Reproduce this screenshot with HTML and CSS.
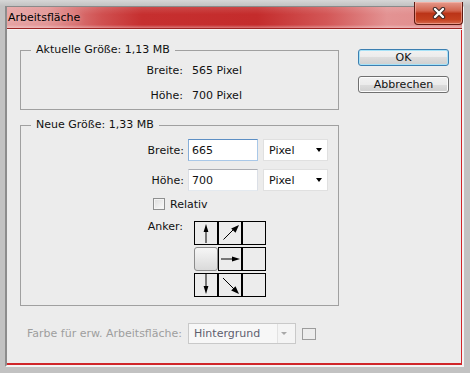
FILE: index.html
```html
<!DOCTYPE html>
<html lang="de">

<head>
    <meta charset="UTF-8">
    <title>Arbeitsfläche</title>
    <link rel="stylesheet" href="styles.css">
</head>

<body>
    <div class="frame">
        <div class="window">
            <header class="titlebar">
                <span class="title">Arbeitsfläche</span>
                <button class="close" aria-label="Schließen">
                    <svg width="14" height="12" viewBox="0 0 14 12">
                        <path d="M3 2 L11 10 M11 2 L3 10" stroke="#3b2a28" stroke-width="4.4" stroke-linecap="round" />
                        <path d="M3 2 L11 10 M11 2 L3 10" stroke="#ffffff" stroke-width="2.4" stroke-linecap="round" />
                    </svg>
                </button>
            </header>

            <div class="content">
                <div class="main-col">
                    <fieldset class="group group-current">
                        <legend>Aktuelle Größe: 1,13 MB</legend>
                        <div class="info-row">
                            <span class="label">Breite:</span>
                            <span class="value">565 Pixel</span>
                        </div>
                        <div class="info-row">
                            <span class="label">Höhe:</span>
                            <span class="value">700 Pixel</span>
                        </div>
                    </fieldset>

                    <fieldset class="group group-new">
                        <legend>Neue Größe: 1,33 MB</legend>
                        <div class="field-row">
                            <label class="label" for="breite">Breite:</label>
                            <input class="text-input focused" id="breite" type="text" value="665">
                            <div class="dropdown">
                                <span>Pixel</span>
                                <span class="caret"></span>
                            </div>
                        </div>
                        <div class="field-row">
                            <label class="label" for="hoehe">Höhe:</label>
                            <input class="text-input" id="hoehe" type="text" value="700">
                            <div class="dropdown">
                                <span>Pixel</span>
                                <span class="caret"></span>
                            </div>
                        </div>
                        <div class="check-row">
                            <span class="checkbox"></span>
                            <span>Relativ</span>
                        </div>
                        <div class="anchor-row">
                            <span class="label">Anker:</span>
                            <div class="anchor-grid">
                                <div class="cell">
                                    <svg viewBox="0 0 22 22">
                                        <path d="M11 8 V21" stroke="#000" stroke-width="1" />
                                        <polygon points="11,2 8.6,10 13.4,10" fill="#000" />
                                    </svg>
                                </div>
                                <div class="cell">
                                    <svg viewBox="0 0 22 22">
                                        <path d="M4.5 17.5 L15 7" stroke="#000" stroke-width="1" />
                                        <polygon points="20,3 16.5,10.8 12.2,6.5" fill="#000" />
                                    </svg>
                                </div>
                                <div class="cell"></div>

                                <div class="cell selected"></div>
                                <div class="cell">
                                    <svg viewBox="0 0 22 22">
                                        <path d="M2 11 H15" stroke="#000" stroke-width="1" />
                                        <polygon points="21,11 13,8.6 13,13.4" fill="#000" />
                                    </svg>
                                </div>
                                <div class="cell"></div>

                                <div class="cell">
                                    <svg viewBox="0 0 22 22">
                                        <path d="M11 0 V14" stroke="#000" stroke-width="1" />
                                        <polygon points="11,20 8.6,12 13.4,12" fill="#000" />
                                    </svg>
                                </div>
                                <div class="cell">
                                    <svg viewBox="0 0 22 22">
                                        <path d="M4 4 L15 15" stroke="#000" stroke-width="1" />
                                        <polygon points="20,20 12.2,16.5 16.5,12.2" fill="#000" />
                                    </svg>
                                </div>
                                <div class="cell"></div>
                            </div>
                        </div>
                    </fieldset>

                    <div class="fill-row">
                        <span class="fill-label">Farbe für erw. Arbeitsfläche:</span>
                        <div class="dropdown disabled">
                            <span>Hintergrund</span>
                            <span class="caret"></span>
                        </div>
                        <span class="swatch"></span>
                    </div>
                </div>

                <div class="buttons">
                    <button class="btn btn-default">OK</button>
                    <button class="btn">Abbrechen</button>
                </div>
            </div>
        </div>
    </div>
</body>

</html>
```

FILE: styles.css
```css
body {
    margin: 0;
    font-family: "DejaVu Sans", sans-serif;
    font-size: 11px;
    color: #111;
    background-color: #c4c4c4;
}

.frame {
    width: 470px;
    height: 373px;
    box-sizing: border-box;
    padding: 6px 6px 6px 5px;
    background: linear-gradient(#d6d6d6, #c2c2c2 6px, #c2c2c2);
}

.window {
    position: relative;
    height: 100%;
    box-sizing: border-box;
    display: flex;
    flex-direction: column;
    border-left: 2px solid #8c8c8c;
    border-top: 1px solid #8a8a8a;
    border-right: 2px solid #f4f4f4;
    border-bottom: 2px solid #f4f4f4;
    box-shadow: inset -1px -2px 0 #d0262a;
    background-color: #ececec;
}

/* title bar */
.titlebar {
    height: 21px;
    flex: none;
    display: flex;
    align-items: center;
    padding-left: 1px;
    border-bottom: 1px solid #9c2424;
    background:
        linear-gradient(rgba(255, 255, 255, 0.12), rgba(255, 255, 255, 0) 35%, rgba(255, 255, 255, 0) 85%, rgba(255, 255, 255, 0.35)),
        linear-gradient(to right, #e6a2a2 0, #e29494 40px, #d05050 95px, #c62f2f 135px, #c42c2c 250px, #d35757 320px, #e39393 380px, #e08a8a 454px);
}

.title {
    color: #000;
    text-shadow: 0 0 6px rgba(255, 255, 255, 0.5);
}

.close {
    position: absolute;
    top: -5px;
    right: -1px;
    width: 49px;
    height: 23px;
    padding: 0;
    display: flex;
    align-items: center;
    justify-content: center;
    border: 1px solid #5e1a12;
    border-top: none;
    border-radius: 0 0 4px 4px;
    background: linear-gradient(#e59a8c, #d2644d 40%, #bb3418 52%, #c4401f 80%, #d6694e);
    box-shadow: inset 0 0 0 1px rgba(255, 200, 190, 0.5);
}

.close svg {
    display: block;
}

/* content */
.content {
    flex: 1;
    display: flex;
    gap: 19px;
    padding: 13px 0 0 13px;
    border-top: 1px solid #f7f7f7;
}

.main-col {
    width: 319px;
    display: flex;
    flex-direction: column;
}

.group {
    margin: 0;
    padding: 1px 10px 1px;
    border: 1px solid #a0a0a0;
    min-width: 0;
}

.group legend {
    padding: 0 5px;
    line-height: 14px;
}

.group-new {
    margin-top: 8px;
    padding: 7px 10px 8px;
}

.info-row {
    height: 25px;
    display: flex;
    align-items: center;
    gap: 9px;
}

.label {
    width: 152px;
    text-align: right;
    flex: none;
}

.field-row {
    height: 22px;
    display: flex;
    align-items: center;
    margin-bottom: 8px;
}

.field-row .label {
    width: 153px;
    margin-right: 4px;
}

.text-input {
    width: 70px;
    height: 22px;
    box-sizing: border-box;
    margin: 0 5px 0 0;
    padding: 0 3px;
    font: inherit;
    color: #111;
    background: #fff;
    border: 1px solid #dbdfe6;
    border-top-color: #abadb3;
    border-bottom-color: #e3e9ef;
    outline: none;
}

.text-input.focused {
    border-color: #a9c8e8;
    border-top-color: #5d8fc4;
    border-left-color: #86aed8;
}

.dropdown {
    width: 67px;
    height: 22px;
    box-sizing: border-box;
    display: flex;
    align-items: center;
    justify-content: space-between;
    padding: 0 5px 0 5px;
    background: #fff;
    border: 1px solid #e0e0e0;
}

.caret {
    width: 0;
    height: 0;
    border-left: 3.5px solid transparent;
    border-right: 3.5px solid transparent;
    border-top: 4px solid #000;
}

.check-row {
    height: 14px;
    display: flex;
    align-items: center;
    gap: 5px;
    margin: -2px 0 0 122px;
}

.checkbox {
    width: 12px;
    height: 12px;
    box-sizing: border-box;
    border: 1px solid #8e8f8f;
    background: linear-gradient(135deg, #dcdcdc, #fbfbfb);
    box-shadow: inset 0 0 0 1px #f4f4f4;
}

.anchor-row {
    display: flex;
    align-items: flex-start;
    gap: 11px;
    margin-top: 10px;
}

.anchor-row .label {
    line-height: 12px;
}

.anchor-grid {
    display: grid;
    grid-template-columns: repeat(3, 24px);
    grid-auto-rows: 24px;
    row-gap: 2px;
}

.cell {
    box-sizing: border-box;
    border: 1px solid #000;
}

.cell svg {
    display: block;
    width: 22px;
    height: 22px;
}

.cell.selected {
    border-color: #8b8b8b;
    border-radius: 3px;
    background: linear-gradient(#f6f6f6, #dadada);
}

/* bottom row */
.fill-row {
    display: flex;
    align-items: center;
    gap: 6px;
    margin-top: 17px;
    padding-left: 7px;
}

.fill-label {
    color: #9e9e9e;
}

.dropdown.disabled {
    width: 108px;
    height: 21px;
    padding: 0 8px 0 5px;
    color: #5e5e6e;
    border-color: #c9c9c9;
    background: linear-gradient(to right, #f7f7f7 0, #f7f7f7 88px, #e2e2e2 88px, #e2e2e2 89px, #f4f4f4 89px);
}

.dropdown.disabled .caret {
    border-top-color: #a8a8a8;
    border-left-width: 3px;
    border-right-width: 3px;
    border-top-width: 3px;
}

.swatch {
    width: 14px;
    height: 12px;
    box-sizing: border-box;
    border: 1px solid #9c9c9c;
}

/* buttons */
.buttons {
    display: flex;
    flex-direction: column;
    gap: 10px;
    margin-top: 6px;
}

.btn {
    width: 91px;
    height: 17px;
    padding: 0;
    font: inherit;
    color: #111;
    line-height: 15px;
    border: 1px solid #707070;
    border-radius: 3px;
    background: linear-gradient(#f2f2f2, #ebebeb 50%, #dddddd 50%, #cfcfcf);
    box-shadow: inset 0 0 0 1px #fcfcfc;
}

.btn-default {
    border-color: #3c7fb1;
    box-shadow: inset 0 0 0 1px #a7e2f7;
}
```
